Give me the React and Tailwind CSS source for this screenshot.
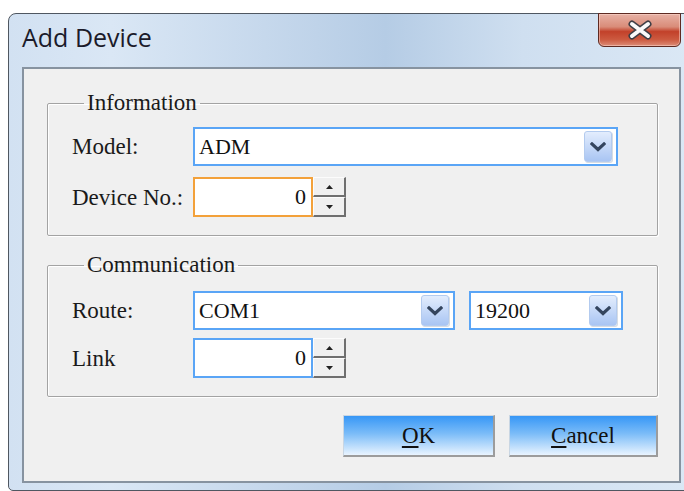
import React from 'react';

// small chevron used in the combo box drop buttons
const Chevron = () => (
  <svg width="16" height="10" viewBox="0 0 16 10">
    <path d="M2 2 L8 7.5 L14 2" fill="none" stroke="#34455e" strokeWidth="3.2" strokeLinecap="square" />
  </svg>
);

const ComboBox = ({ value, width }) => (
  <div className={`${width} h-[39px] border-2 border-[#5aa5f6] bg-white flex items-center justify-between pl-[4px] pr-[4px]`}>
    <span className="text-[22px] leading-none text-[#111]">{value}</span>
    <div className="w-[28px] h-[31px] rounded-[3px] border border-[#b3cbef] bg-[linear-gradient(to_bottom,#e3edfd,#a9c5f3)] shadow-[1px_1px_0_#d6dce4] flex items-center justify-center">
      <Chevron />
    </div>
  </div>
);

const SpinButton = ({ up }) => (
  <div className="h-[20px] w-[33px] bg-[#f0f0f0] border-t border-l border-[#fcfcfc] border-r-2 border-b-2 border-r-[#6f6f6f] border-b-[#6f6f6f] flex items-center justify-center">
    <svg width="7" height="4" viewBox="0 0 7 4">
      {up ? <path d="M3.5 0 L7 4 L0 4 Z" fill="#222" /> : <path d="M0 0 L7 0 L3.5 4 Z" fill="#222" />}
    </svg>
  </div>
);

const SpinBox = ({ value, border }) => (
  <div className="flex">
    <div className={`w-[120px] h-[40px] border-2 ${border} bg-white flex items-center justify-end pr-[5px]`}>
      <span className="text-[22px] leading-none text-[#111]">{value}</span>
    </div>
    <div className="flex flex-col">
      <SpinButton up />
      <SpinButton />
    </div>
  </div>
);

const Row = ({ label, children }) => (
  <div className="flex items-center">
    <div className="w-[121px] text-[23px] leading-none text-[#1a1a1a]">{label}</div>
    {children}
  </div>
);

const Group = ({ title, className, children }) => (
  <fieldset className={`border border-[#a3a3a3] rounded-[2px] shadow-[inset_1px_1px_0_#fff,1px_1px_0_#fff] px-[24px] ${className}`}>
    <legend className="ml-[12px] px-[3px] text-[23px] leading-[22px] text-[#1a1a1a]">{title}</legend>
    {children}
  </fieldset>
);

const DialogButton = ({ mnemonic, rest, width }) => (
  <button className={`${width} h-[42px] border border-[#c9d6e3] border-r-2 border-b-2 border-r-[#9c9c9c] border-b-[#9c9c9c] bg-[linear-gradient(to_bottom,#3797f6,#7bbcf8_45%,#e9f4ff)] text-[23px] leading-none text-[#111]`}>
    <span className="underline underline-offset-[3px]">{mnemonic}</span>
    {rest}
  </button>
);

export default function App() {
  return (
    <div className="w-[684px] h-[491px] overflow-hidden bg-white">
      <div className="ml-[8px] mt-[13px] w-[687px] h-[478px] rounded-t-[8px] rounded-b-[5px] border border-[#4f5761] bg-[linear-gradient(to_right,#d2e1f2_0%,#dae7f5_15%,#bfd3e9_45%,#b5cce5_55%,#cfdff0_75%,#dbe8f5_100%)] flex flex-col">
        {/* title bar */}
        <div className="h-[53px] flex justify-between pl-[13px] pr-[13px]">
          <div className="pt-[7px] font-['Open_Sans'] text-[25px] leading-[32px] text-[#1b1b2a]">Add Device</div>
          <div className="w-[83px] h-[34px] -mt-px rounded-b-[6px] border border-[#5e2a22] bg-[linear-gradient(to_bottom,#e7b1a5_0%,#d98c79_40%,#c2412a_55%,#cc5a40_80%,#dc8d78_100%)] shadow-[inset_0_0_0_1px_rgba(255,220,210,0.5)] flex items-center justify-center">
            <svg width="26" height="20" viewBox="0 0 26 20">
              <path d="M5 4 L21 16 M21 4 L5 16" stroke="#3f3f46" strokeWidth="7" strokeLinecap="round" />
              <path d="M5 4 L21 16 M21 4 L5 16" stroke="#fafafa" strokeWidth="4" strokeLinecap="round" />
            </svg>
          </div>
        </div>

        {/* client area */}
        <div className="ml-[13px] w-[659px] h-[416px] border-2 border-[#8793a0] bg-[#f0f0f0] pl-[23px] pr-[21px] pt-[23px] font-['Liberation_Serif']">
          <Group title="Information" className="pt-[13px] pb-[18px]">
            <div className="flex flex-col gap-[11px]">
              <Row label="Model:">
                <ComboBox value="ADM" width="w-[425px]" />
              </Row>
              <Row label="Device No.:">
                <SpinBox value="0" border="border-[#f3a13a]" />
              </Row>
            </div>
          </Group>

          <Group title="Communication" className="mt-[18px] pt-[15px] pb-[18px]">
            <div className="flex flex-col gap-[8px]">
              <Row label="Route:">
                <div className="flex gap-[14px]">
                  <ComboBox value="COM1" width="w-[262px]" />
                  <ComboBox value="19200" width="w-[154px]" />
                </div>
              </Row>
              <Row label="Link">
                <SpinBox value="0" border="border-[#5aa5f6]" />
              </Row>
            </div>
          </Group>

          <div className="mt-[18px] flex justify-end gap-[14px]">
            <DialogButton mnemonic="O" rest="K" width="w-[152px]" />
            <DialogButton mnemonic="C" rest="ancel" width="w-[149px]" />
          </div>
        </div>
      </div>
    </div>
  );
}
